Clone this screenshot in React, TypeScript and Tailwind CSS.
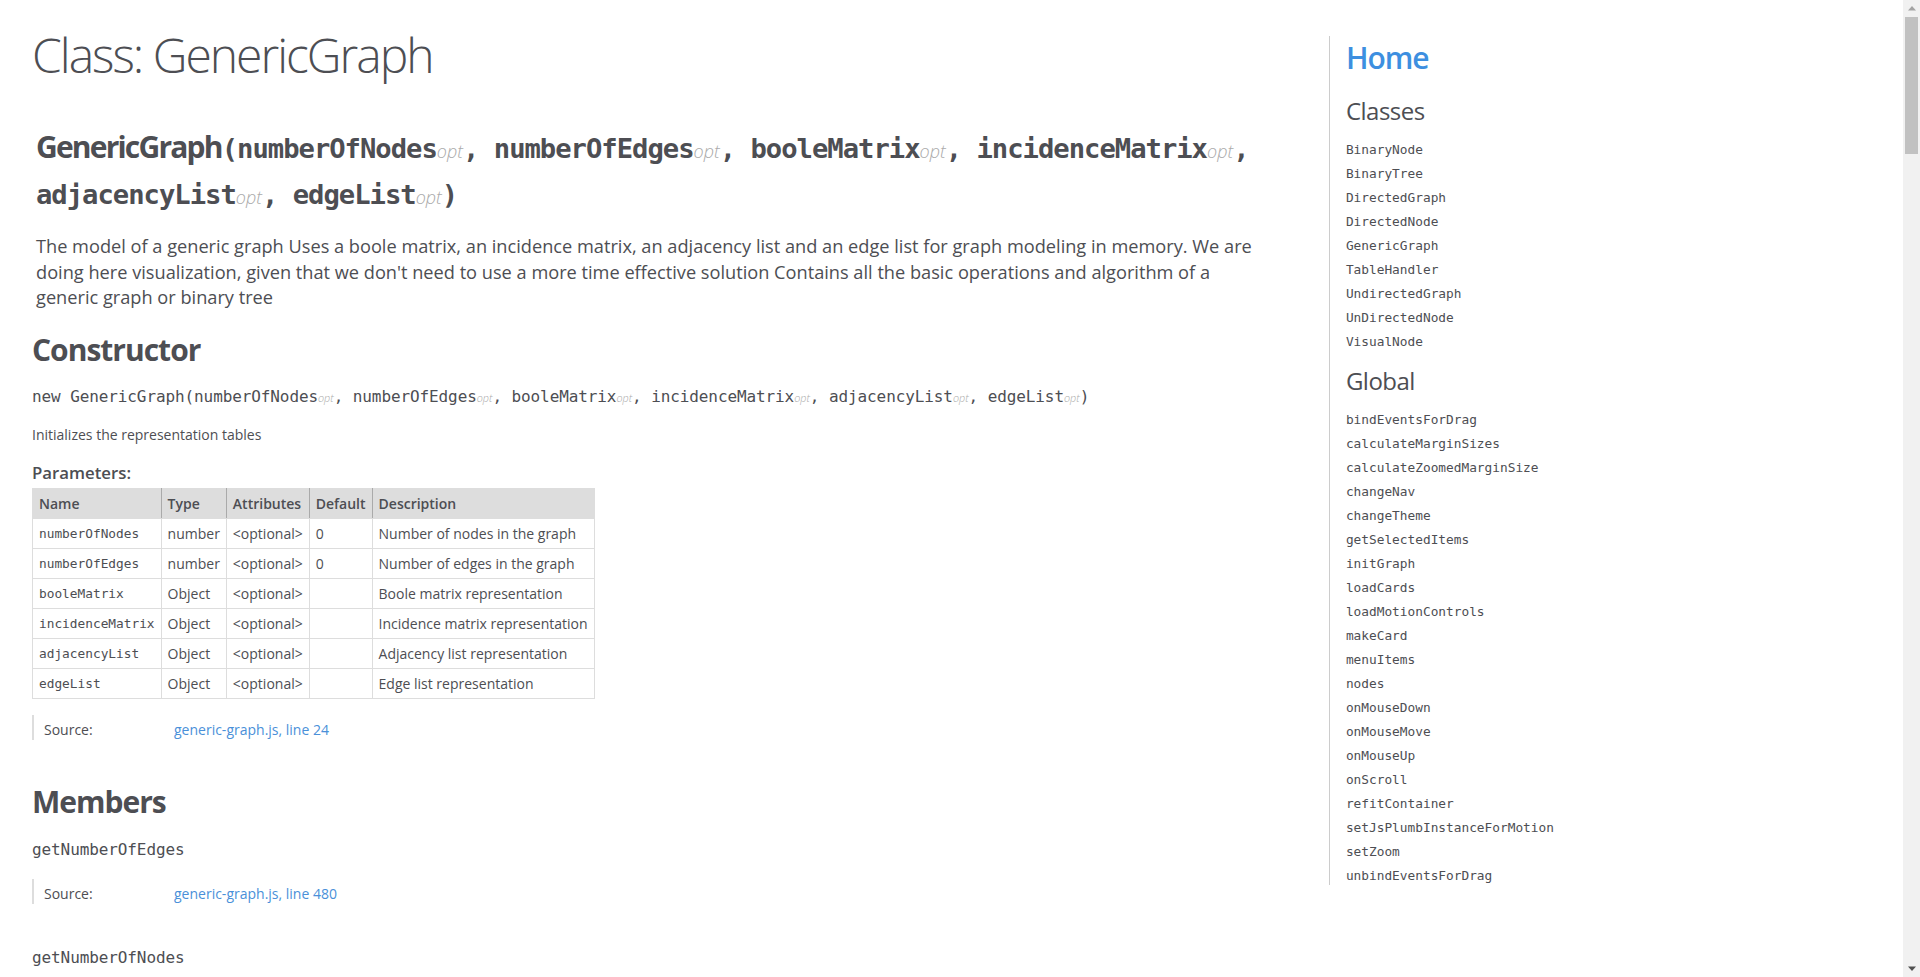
import React from "react";

const SANS = "font-['Open_Sans',sans-serif]";
const MONO = "font-['DejaVu_Sans_Mono',monospace]";

const classes = [
  "BinaryNode",
  "BinaryTree",
  "DirectedGraph",
  "DirectedNode",
  "GenericGraph",
  "TableHandler",
  "UndirectedGraph",
  "UnDirectedNode",
  "VisualNode",
];

const globals = [
  "bindEventsForDrag",
  "calculateMarginSizes",
  "calculateZoomedMarginSize",
  "changeNav",
  "changeTheme",
  "getSelectedItems",
  "initGraph",
  "loadCards",
  "loadMotionControls",
  "makeCard",
  "menuItems",
  "nodes",
  "onMouseDown",
  "onMouseMove",
  "onMouseUp",
  "onScroll",
  "refitContainer",
  "setJsPlumbInstanceForMotion",
  "setZoom",
  "unbindEventsForDrag",
];

const params = [
  ["numberOfNodes", "number", "<optional>", "0", "Number of nodes in the graph"],
  ["numberOfEdges", "number", "<optional>", "0", "Number of edges in the graph"],
  ["booleMatrix", "Object", "<optional>", "", "Boole matrix representation"],
  ["incidenceMatrix", "Object", "<optional>", "", "Incidence matrix representation"],
  ["adjacencyList", "Object", "<optional>", "", "Adjacency list representation"],
  ["edgeList", "Object", "<optional>", "", "Edge list representation"],
];

const sigNames = [
  "numberOfNodes",
  "numberOfEdges",
  "booleMatrix",
  "incidenceMatrix",
  "adjacencyList",
  "edgeList",
];

function BigOpt() {
  return (
    <span className={`${SANS} italic font-light text-[#aaa] text-[18px] tracking-normal leading-none`}>opt</span>
  );
}

function SmallOpt() {
  return (
    <span className={`${SANS} italic font-light text-[#aaa] text-[10.8px] tracking-normal leading-none`}>opt</span>
  );
}

function Source({ line }: { line: string }) {
  return (
    <dl className="border-l-2 border-[#ddd] h-[25px] flex items-start text-[14px] leading-[21px] pt-[4px] m-0">
      <dt className="w-[140px] pl-[10px] shrink-0">Source:</dt>
      <dd className="m-0">
        <a className="text-[#4a90d9]">generic-graph.js</a>
        <span className="text-[#4a90d9]">, </span>
        <a className="text-[#4a90d9]">line {line}</a>
      </dd>
    </dl>
  );
}

function ScrollBar() {
  return (
    <div className="w-[17px] shrink-0 h-full bg-[#f1f1f1] flex flex-col">
      <div className="h-[17px] flex items-center justify-center">
        <svg width="8" height="5" viewBox="0 0 8 5">
          <polygon points="4,0 8,4.5 0,4.5" fill="#a3a3a3" />
        </svg>
      </div>
      <div className="h-[137px] mx-[2px] bg-[#c1c1c1]" />
      <div className="flex-1" />
      <div className="h-[17px] flex items-center justify-center">
        <svg width="8" height="5" viewBox="0 0 8 5">
          <polygon points="0,0.5 8,0.5 4,5" fill="#505050" />
        </svg>
      </div>
    </div>
  );
}

export default function App() {
  return (
    <div className={`flex h-screen overflow-hidden bg-white text-[#4d4e53] ${SANS}`}>
      <div className="flex-1 min-w-0 h-full overflow-hidden">
        <div className="p-2">
          <div className="flex items-start">
            {/* MAIN */}
            <div className="w-[70%] shrink-0">
              <h1 className={`${SANS} font-light text-[48px] tracking-[-2px] leading-[65px] mx-6 mt-[14px] mb-[18px]`}>
                Class: GenericGraph
              </h1>
              <section className="mr-[30px] px-6 pt-3">
                <header className="px-1">
                  <h2 className="mt-[7px] text-[30px] font-bold tracking-[-1.8px] leading-[46px]">
                    GenericGraph
                    <span className={`${MONO} font-bold text-[27.2px] tracking-[-1px] leading-[30px]`}>
                      (
                      {sigNames.map((n, i) => (
                        <React.Fragment key={n}>
                          {n}
                          <BigOpt />
                          {i < sigNames.length - 1 ? ", " : ""}
                        </React.Fragment>
                      ))}
                      )
                    </span>
                  </h2>
                  <div className="mt-[18px] text-[18.2px] leading-[25.5px]">
                    The model of a generic graph Uses a boole matrix, an incidence matrix, an adjacency list and an edge list for graph modeling in memory. We are doing here visualization, given that we don't need to use a more time effective solution Contains all the basic operations and algorithm of a generic graph or binary tree
                  </div>
                </header>

                <article>
                  <h2 className="mt-[18px] text-[30px] font-bold tracking-[-1px] leading-[41px]">Constructor</h2>
                  <h4 className={`${MONO} mt-[12px] text-[16px] tracking-[-0.1px] leading-[30px]`}>
                    new GenericGraph(
                    {sigNames.map((n, i) => (
                      <React.Fragment key={n}>
                        {n}
                        <SmallOpt />
                        {i < sigNames.length - 1 ? ", " : ""}
                      </React.Fragment>
                    ))}
                    )
                  </h4>
                  <div className="mt-[13px] text-[14px] leading-[20px]">Initializes the representation tables</div>
                  <h5 className="mt-[16px] text-[16.8px] font-semibold leading-[23px]">Parameters:</h5>
                  <table className="border-collapse text-[14px] mt-[4px]">
                    <thead>
                      <tr className="bg-[#ddd] font-bold">
                        {["Name", "Type", "Attributes", "Default", "Description"].map((h, i) => (
                          <th
                            key={h}
                            className={`text-left font-semibold px-[6px] py-[4px] leading-[21px] border border-[#ddd] ${
                              i < 4 ? "border-r-[#aaa]" : ""
                            }`}
                          >
                            {h}
                          </th>
                        ))}
                      </tr>
                    </thead>
                    <tbody>
                      {params.map((r) => (
                        <tr key={r[0]}>
                          <td className={`${MONO} text-[12.8px] px-[6px] py-[4px] leading-[21px] border border-[#ddd] align-top`}>
                            {r[0]}
                          </td>
                          <td className="px-[6px] py-[4px] leading-[21px] border border-[#ddd] align-top">{r[1]}</td>
                          <td className="px-[6px] py-[4px] leading-[21px] border border-[#ddd] align-top">{r[2]}</td>
                          <td className="px-[6px] py-[4px] leading-[21px] border border-[#ddd] align-top">{r[3]}</td>
                          <td className="px-[6px] py-[4px] leading-[21px] border border-[#ddd] align-top">{r[4]}</td>
                        </tr>
                      ))}
                    </tbody>
                  </table>
                  <div className="mt-[16px]">
                    <Source line="24" />
                  </div>

                  <h3 className="mt-[41px] text-[30px] font-bold tracking-[-1px] leading-[41px]">Members</h3>
                  <h4 className={`${MONO} mt-[13px] text-[16px] tracking-[-0.1px] leading-[30px]`}>getNumberOfEdges</h4>
                  <div className="mt-[14px]">
                    <Source line="480" />
                  </div>
                  <h4 className={`${MONO} mt-[41px] text-[16px] tracking-[-0.1px] leading-[26px]`}>getNumberOfNodes</h4>
                </article>
              </section>
            </div>

            {/* NAV */}
            <nav className="w-[30%] mt-[28px] border-l border-[#ccc] pl-4">
              <h2 className="pt-[1px] text-[30px] font-semibold tracking-[-1px] leading-[41px]">
                <a className="text-[#3d8fe0]">Home</a>
              </h2>
              <h3 className="mt-[16px] text-[24px] font-normal tracking-[-0.5px] leading-[33px]">Classes</h3>
              <ul className="m-0 pt-[8px] pl-0 list-none">
                {classes.map((c) => (
                  <li key={c} className="mt-[6px]">
                    <a className={`${MONO} text-[12.8px] leading-[18px] text-[#4d4e53] block`}>{c}</a>
                  </li>
                ))}
              </ul>
              <h3 className="mt-[13px] text-[24px] font-normal tracking-[-0.5px] leading-[33px]">Global</h3>
              <ul className="m-0 pt-[8px] pl-0 list-none">
                {globals.map((c) => (
                  <li key={c} className="mt-[6px]">
                    <a className={`${MONO} text-[12.8px] leading-[18px] text-[#4d4e53] block`}>{c}</a>
                  </li>
                ))}
              </ul>
            </nav>
          </div>
        </div>
      </div>
      <ScrollBar />
    </div>
  );
}
